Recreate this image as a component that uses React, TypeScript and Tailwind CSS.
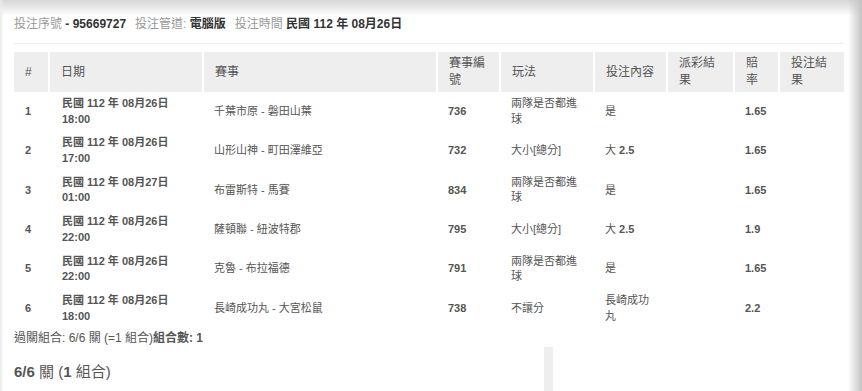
import React from "react";

type Leg = {
  no: number;
  date: string;
  time: string;
  match: string;
  code: string;
  play: string;
  pick: React.ReactNode;
  odds: string;
};

const LEGS: Leg[] = [
  { no: 1, date: "民國 112 年 08月26日", time: "18:00", match: "千葉市原 - 磐田山葉", code: "736", play: "兩隊是否都進球", pick: "是", odds: "1.65" },
  { no: 2, date: "民國 112 年 08月26日", time: "17:00", match: "山形山神 - 町田澤維亞", code: "732", play: "大小[總分]", pick: <>大&nbsp;<b>2.5</b></>, odds: "1.65" },
  { no: 3, date: "民國 112 年 08月27日", time: "01:00", match: "布雷斯特 - 馬賽", code: "834", play: "兩隊是否都進球", pick: "是", odds: "1.65" },
  { no: 4, date: "民國 112 年 08月26日", time: "22:00", match: "薩頓聯 - 紐波特郡", code: "795", play: "大小[總分]", pick: <>大&nbsp;<b>2.5</b></>, odds: "1.9" },
  { no: 5, date: "民國 112 年 08月26日", time: "22:00", match: "克魯 - 布拉福德", code: "791", play: "兩隊是否都進球", pick: "是", odds: "1.65" },
  { no: 6, date: "民國 112 年 08月26日", time: "18:00", match: "長崎成功丸 - 大宮松鼠", code: "738", play: "不讓分", pick: "長崎成功丸", odds: "2.2" },
];

const HEADERS = ["#", "日期", "賽事", "賽事編號", "玩法", "投注內容", "派彩結果", "賠率", "投注結果"];

const COLS =
  "grid grid-cols-[34px_152px_232px_61px_92px_71px_65px_43px_64px] gap-x-[2px]";

export default function App() {
  return (
    <div
      className="relative w-[862px] h-[391px] overflow-hidden bg-white text-[#555] px-[14px]"
      style={{ fontFamily: '"Liberation Sans", Arial, "Noto Sans CJK TC", sans-serif' }}
    >
      {/* Bet meta */}
      <div className="pt-[16px] text-[12px] leading-[17px] flex items-center gap-[9px] whitespace-nowrap">
        <span>
          <span className="text-[#999]">投注序號</span>
          <span className="text-[#333] font-bold"> - 95669727</span>
        </span>
        <span>
          <span className="text-[#999]">投注管道: </span>
          <span className="text-[#333] font-bold">電腦版</span>
        </span>
        <span>
          <span className="text-[#999]">投注時間 </span>
          <span className="text-[#333] font-bold">民國 112 年 08月26日</span>
        </span>
      </div>
      <div className="mt-[10px] h-px w-[830px] bg-[#eee]" />

      {/* Legs table */}
      <div className="mt-[8px] w-[830px]">
        <div className={`${COLS} text-[12px] leading-[17px]`}>
          {HEADERS.map((h) => (
            <div
              key={h}
              className="bg-[#eee] h-[40px] flex items-center pl-[11px] pr-[10px]"
            >
              <span className="break-all">{h}</span>
            </div>
          ))}
        </div>
        {LEGS.map((l) => (
          <div
            key={l.no}
            className={`${COLS} h-[39.4px] text-[11px] leading-[1.42857]`}
          >
            <div className="flex items-center pl-[11px] font-bold">{l.no}</div>
            <div className="flex flex-col justify-center pl-[12px] font-bold">
              <span>{l.date}</span>
              <span>{l.time}</span>
            </div>
            <div className="flex items-center pl-[10px]">{l.match}</div>
            <div className="flex items-center pl-[10px] font-bold">{l.code}</div>
            <div className="flex items-center pl-[10px] pr-[14px] break-all">{l.play}</div>
            <div className="flex items-center pl-[10px] pr-[12px] break-all">{l.pick}</div>
            <div />
            <div className="flex items-center pl-[10px] font-bold">{l.odds}</div>
            <div />
          </div>
        ))}
      </div>

      {/* Combination summary */}
      <div className="mt-[2px] text-[12px] leading-[17px] whitespace-nowrap">
        過關組合: 6/6 關 (=1 組合)<b>組合數: 1</b>
      </div>
      <div className="flex">
        <div className="w-[530px] pt-[14px] text-[15px] leading-[21px]">
          <b>6/6</b> 關 (<b>1</b> 組合)
        </div>
        <div className="w-[9px] h-[60px] bg-[#eee]" />
      </div>

      {/* window shadows */}
      <div className="pointer-events-none absolute inset-x-0 top-0 h-[16px] bg-gradient-to-b from-[#d6d6d6] to-transparent" />
      <div className="pointer-events-none absolute inset-y-0 right-0 w-[14px] bg-gradient-to-r from-transparent to-[#c4c4c4]" />
      <div className="pointer-events-none absolute inset-y-0 left-0 w-[4px] bg-gradient-to-r from-[#ececec] to-transparent" />
    </div>
  );
}
